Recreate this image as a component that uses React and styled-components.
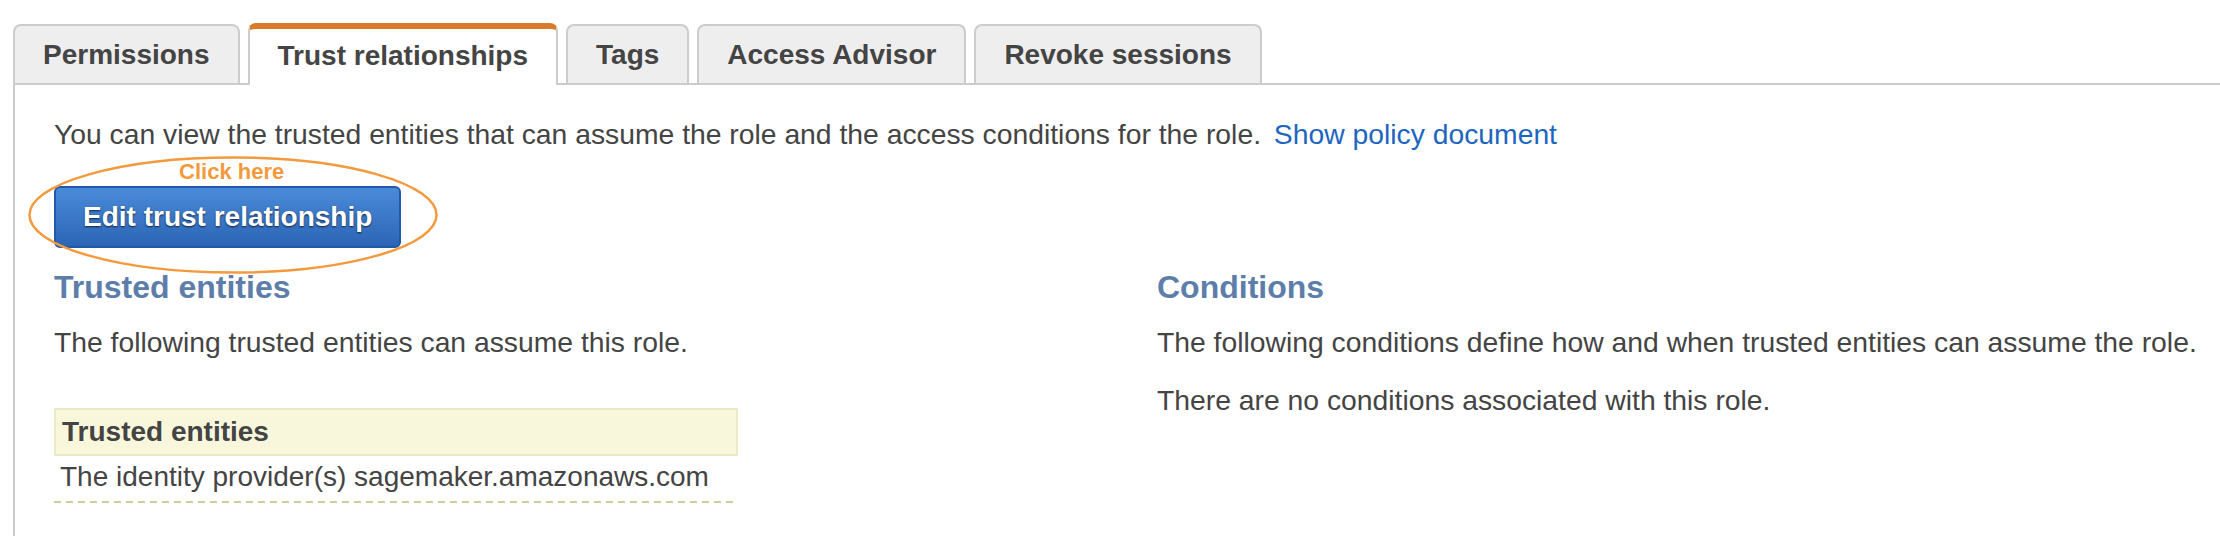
import React from "react";
import styled, { createGlobalStyle } from "styled-components";

const GlobalStyle = createGlobalStyle`
  html, body {
    margin: 0;
    padding: 0;
    background: #fff;
    overflow: hidden;
  }
  body {
    font-family: "Liberation Sans", Arial, Helvetica, sans-serif;
    color: #444;
  }
`;

const tabs = [
  "Permissions",
  "Trust relationships",
  "Tags",
  "Access Advisor",
  "Revoke sessions",
];

const App = () => {
  return (
    <Page>
      <GlobalStyle />
      <TabRow>
        {tabs.map((t) => (
          <Tab key={t} $active={t === "Trust relationships"}>
            {t}
          </Tab>
        ))}
      </TabRow>
      <Panel>
        <Intro>
          You can view the trusted entities that can assume the role and the
          access conditions for the role. <Link href="#">Show policy document</Link>
        </Intro>
        <ButtonArea>
          {/* annotation drawn over the button */}
          <Ring viewBox="0 0 410 118" width="410" height="118">
            <ellipse
              cx="205"
              cy="59"
              rx="203.5"
              ry="57.5"
              fill="none"
              stroke="#f29a3d"
              strokeWidth="2.5"
            />
          </Ring>
          <Hint>Click here</Hint>
          <EditButton type="button">Edit trust relationship</EditButton>
        </ButtonArea>
        <Columns>
          <Column>
            <Heading>Trusted entities</Heading>
            <Para>The following trusted entities can assume this role.</Para>
            <EntityTable>
              <TableHead>Trusted entities</TableHead>
              <TableRow>The identity provider(s) sagemaker.amazonaws.com</TableRow>
            </EntityTable>
          </Column>
          <Column>
            <Heading>Conditions</Heading>
            <Para>
              The following conditions define how and when trusted entities can
              assume the role.
            </Para>
            <Para $gap={18}>There are no conditions associated with this role.</Para>
          </Column>
        </Columns>
      </Panel>
    </Page>
  );
};

const Page = styled.div`
  width: 2220px;
  height: 536px;
  padding-top: 23px;
  box-sizing: border-box;
`;

const TabRow = styled.div`
  display: flex;
  align-items: flex-end;
  gap: 8px;
  padding-left: 13px;
`;

const Tab = styled.div`
  position: relative;
  z-index: 1;
  box-sizing: border-box;
  height: ${(p) => (p.$active ? "62px" : "59px")};
  margin-bottom: ${(p) => (p.$active ? "-2px" : "0")};
  padding: 0 28px;
  display: flex;
  align-items: center;
  font-size: 28px;
  font-weight: 700;
  color: #444;
  white-space: nowrap;
  background: ${(p) => (p.$active ? "#fff" : "#eeeeee")};
  border: 2px solid #cccccc;
  border-top: ${(p) => (p.$active ? "6px solid #dc7a2c" : "2px solid #cccccc")};
  border-bottom: none;
  border-radius: 8px 8px 0 0;
  padding-bottom: ${(p) => (p.$active ? "2px" : "0")};
`;

const Panel = styled.div`
  margin-left: 13px;
  height: 454px;
  box-sizing: border-box;
  border-top: 2px solid #cccccc;
  border-left: 2px solid #cccccc;
  padding: 29px 0 0 39px;
`;

const Intro = styled.div`
  font-size: 28.3px;
  line-height: 40px;
  color: #444;
`;

const Link = styled.a`
  margin-left: 5px;
  color: #1d66bf;
  text-decoration: none;
`;

const ButtonArea = styled.div`
  position: relative;
  display: inline-flex;
  flex-direction: column;
  align-items: center;
  margin-top: 4px;
`;

const Ring = styled.svg`
  position: absolute;
  left: -26px;
  top: -2px;
  pointer-events: none;
`;

const Hint = styled.div`
  font-size: 22px;
  line-height: 28px;
  font-weight: 700;
  color: #f29a3d;
  padding-left: 8px;
`;

const EditButton = styled.button`
  box-sizing: border-box;
  height: 62px;
  padding: 0 27px;
  font-family: inherit;
  font-size: 28px;
  font-weight: 700;
  color: #fff;
  text-shadow: 0 1px 2px rgba(0, 0, 0, 0.7);
  background: linear-gradient(#4a8bd9, #2c65b5);
  border: 2px solid #2058aa;
  border-radius: 6px;
  cursor: pointer;
`;

const Columns = styled.div`
  display: grid;
  grid-template-columns: 1103px 1fr;
  margin-top: 19px;
`;

const Column = styled.div`
  display: flex;
  flex-direction: column;
  align-items: flex-start;
`;

const Heading = styled.h3`
  margin: 0;
  font-size: 32px;
  line-height: 40px;
  font-weight: 700;
  color: #5d7dab;
`;

const Para = styled.p`
  margin: ${(p) => p.$gap || 15}px 0 0;
  font-size: 28.3px;
  line-height: 40px;
  color: #444;
`;

const EntityTable = styled.div`
  width: 684px;
  margin-top: 46px;
`;

const TableHead = styled.div`
  box-sizing: border-box;
  height: 48px;
  padding-left: 6px;
  border: 2px solid #ebe9c6;
  background: #f8f7dc;
  font-size: 28px;
  line-height: 44px;
  font-weight: 700;
  color: #444;
`;

const TableRow = styled.div`
  padding: 1px 0 6px 6px;
  font-size: 28px;
  line-height: 40px;
  color: #444;
  background: repeating-linear-gradient(
      90deg,
      #d0cc99 0 7px,
      transparent 7px 12px
    )
    bottom left / 100% 2px no-repeat;
`;

export default App;
